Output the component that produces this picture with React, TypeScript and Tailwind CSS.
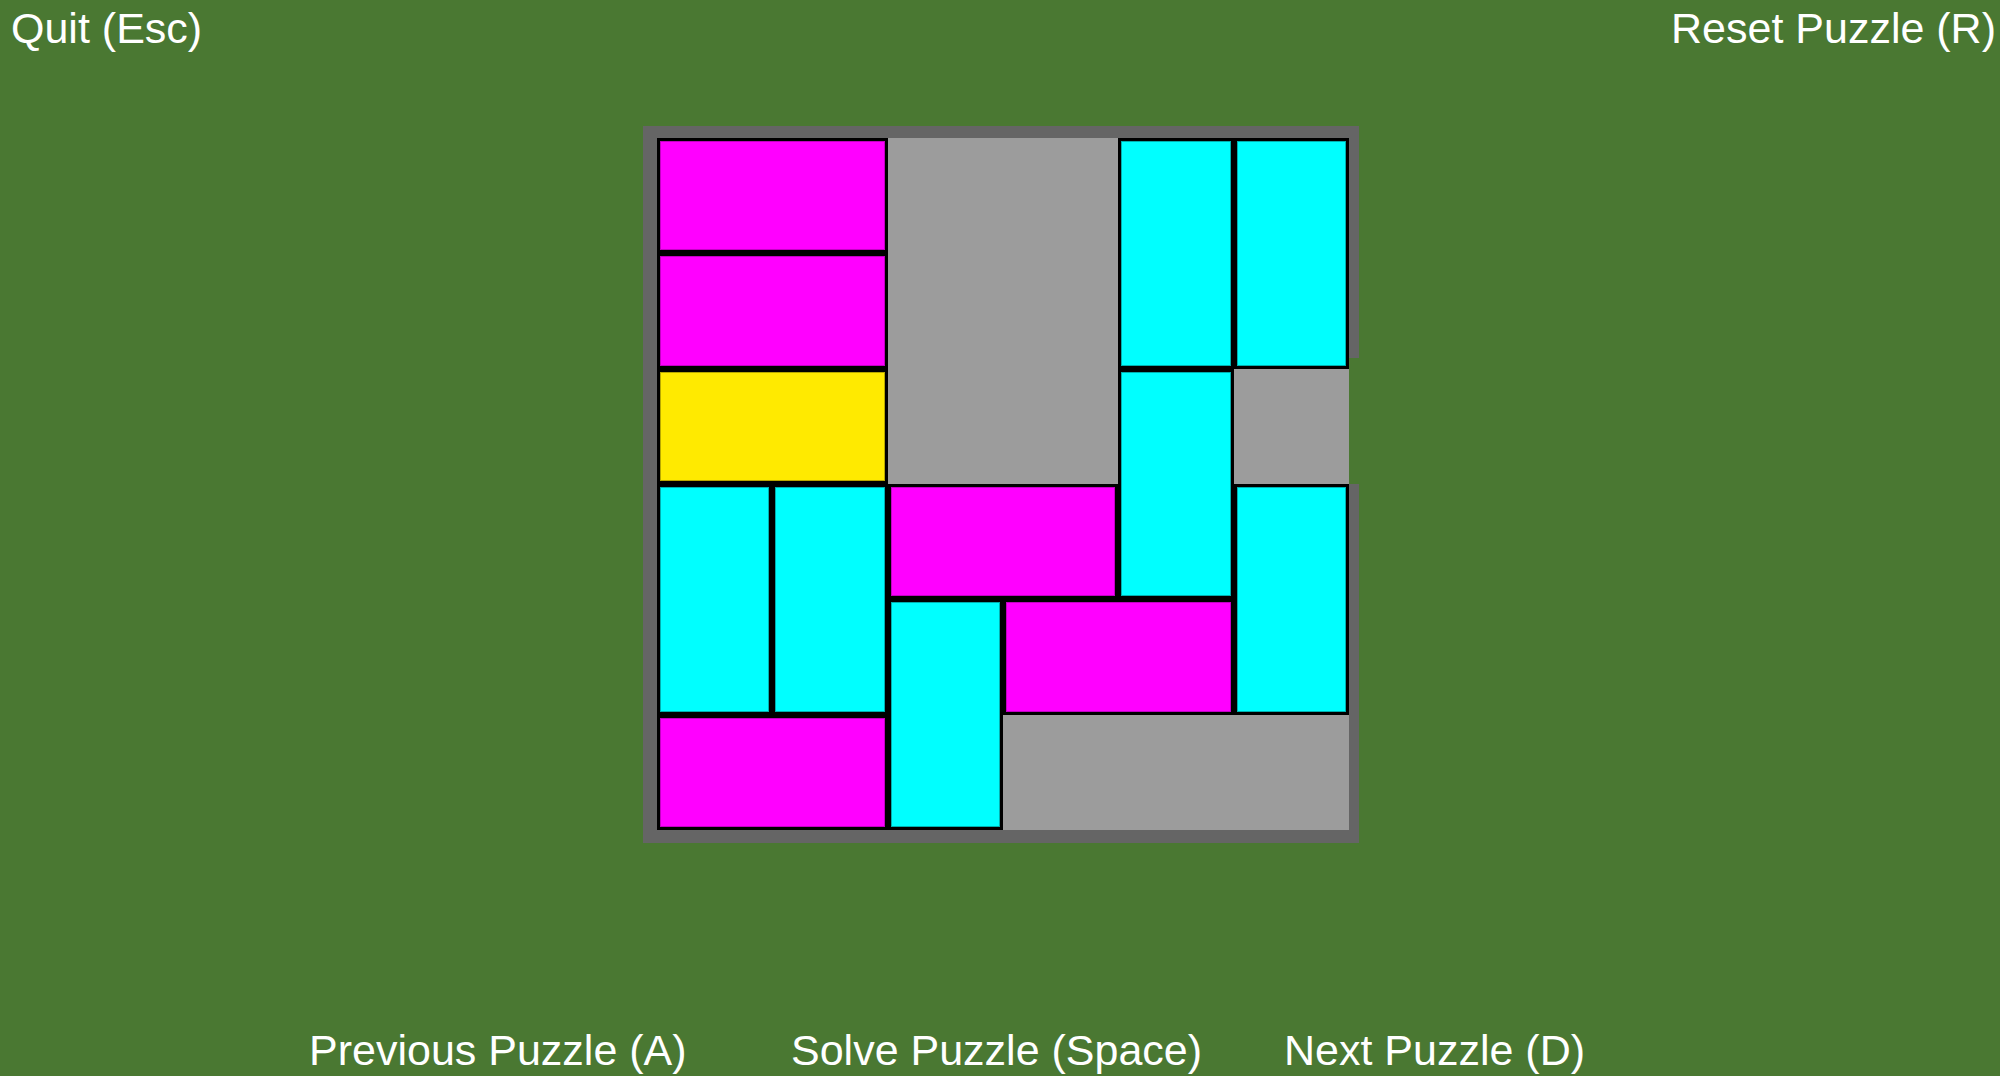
const FONT = { fontFamily: '"Liberation Sans", Arial, sans-serif' };

type Cell = { area: string; fill: string };

// empty slots on the board
const empty: string[] = [
  'col-start-3 col-span-2 row-start-1 row-span-3',
  'col-start-6 row-start-3',
  'col-start-4 col-span-3 row-start-6',
];

const MAGENTA = 'bg-[#ff00ff] border-[#c400c4]';
const CYAN = 'bg-[#00ffff] border-[#00b0b0]';
const YELLOW = 'bg-[#ffea00] border-[#b8a800]';

const pieces: Cell[] = [
  { area: 'col-start-1 col-span-2 row-start-1', fill: MAGENTA },
  { area: 'col-start-1 col-span-2 row-start-2', fill: MAGENTA },
  { area: 'col-start-1 col-span-2 row-start-3', fill: YELLOW },
  { area: 'col-start-5 row-start-1 row-span-2', fill: CYAN },
  { area: 'col-start-6 row-start-1 row-span-2', fill: CYAN },
  { area: 'col-start-5 row-start-3 row-span-2', fill: CYAN },
  { area: 'col-start-1 row-start-4 row-span-2', fill: CYAN },
  { area: 'col-start-2 row-start-4 row-span-2', fill: CYAN },
  { area: 'col-start-3 col-span-2 row-start-4', fill: MAGENTA },
  { area: 'col-start-6 row-start-4 row-span-2', fill: CYAN },
  { area: 'col-start-3 row-start-5 row-span-2', fill: CYAN },
  { area: 'col-start-4 col-span-2 row-start-5', fill: MAGENTA },
  { area: 'col-start-1 col-span-2 row-start-6', fill: MAGENTA },
];

function Board() {
  return (
    <div className="relative bg-[#656565] pl-[14px] pr-[10px] pt-[12px] pb-[13px]">
      {/* exit on the right of the target row */}
      <div className="absolute right-0 top-[232px] h-[126px] w-[10px] bg-[#4a7832]" />
      <div className="grid h-[692px] w-[692px] grid-cols-6 grid-rows-6 bg-black">
        {empty.map((area) => (
          <div key={area} className={`${area} bg-[#9c9c9c]`} />
        ))}
        {pieces.map((p, i) => (
          <div key={i} className={`${p.area} p-[3px]`}>
            <div className={`h-full w-full border ${p.fill}`} />
          </div>
        ))}
      </div>
    </div>
  );
}

export default function App() {
  return (
    <div className="flex h-[1076px] w-full flex-col overflow-hidden bg-[#4a7832] text-white" style={FONT}>
      <div className="flex items-start justify-between pl-[11px] pr-[4px] pt-[4px] text-[43px] leading-[48px]">
        <span>Quit (Esc)</span>
        <span>Reset Puzzle (R)</span>
      </div>

      <div className="mt-[74px] flex justify-center pl-[2px]">
        <Board />
      </div>

      <div className="flex-1" />

      <div className="grid grid-cols-[482px_493px_auto] pb-[2px] pl-[309px] text-[43px] leading-[48px]">
        <span>Previous Puzzle (A)</span>
        <span>Solve Puzzle (Space)</span>
        <span>Next Puzzle (D)</span>
      </div>
    </div>
  );
}
